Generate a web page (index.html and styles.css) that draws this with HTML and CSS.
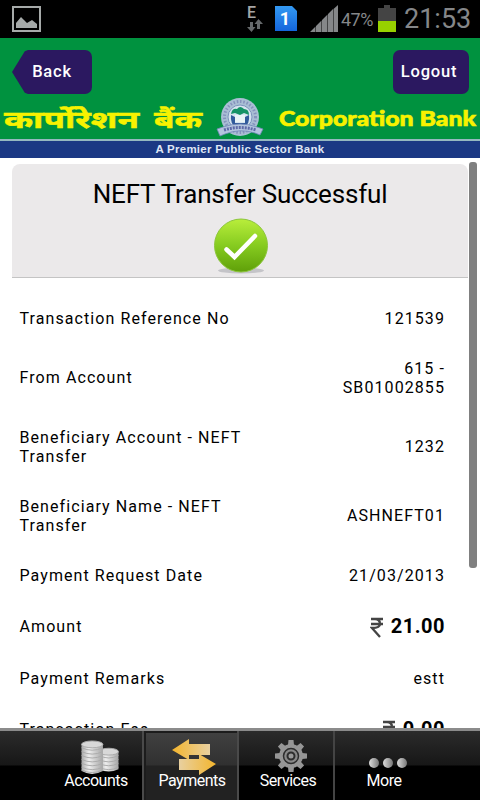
FILE: index.html
```html
<!DOCTYPE html>
<html lang="en">
<head>
    <meta charset="UTF-8">
    <meta name="viewport" content="width=device-width, initial-scale=1.0">
    <title>Corporation Bank - NEFT Transfer</title>
    <link rel="stylesheet" href="styles.css">
</head>
<body>
    <div class="status-bar">
        <svg class="picture-icon" width="29" height="26" viewBox="0 0 29 26">
            <rect x="1" y="1" width="27" height="24" fill="none" stroke="#a6aaa9" stroke-width="2"/>
            <path d="M4 22V17L9 11L12 14L15 17L20 14L25 18V22Z" fill="#a6aaa9"/>
        </svg>
        <div class="edge">
            <span>E</span>
            <svg width="16" height="13" viewBox="0 0 16 13" fill="#66696b">
                <path d="M3 3h3v5h2.500L4.500 13L0 8h3z"/>
                <path d="M10 10h3V5h3L11.500 0L7.500 5H10z"/>
            </svg>
        </div>
        <svg class="sim-icon" width="22" height="25" viewBox="0 0 22 25">
            <defs>
                <linearGradient id="sim" x1="0" y1="0" x2="0" y2="1">
                    <stop offset="0" stop-color="#3399f2"/>
                    <stop offset="1" stop-color="#1465dc"/>
                </linearGradient>
            </defs>
            <path d="M0 0H17L22 5V25H0Z" fill="url(#sim)"/>
            <text x="10" y="18.500" class="sim-number">1</text>
        </svg>
        <svg class="signal-icon" width="29" height="28" viewBox="0 0 29 28" fill="#858789">
            <path d="M0 27L5.500 21.500V27ZM6 21L11.500 15.500V27H6ZM12 15L17.500 9.500V27H12ZM18 9L23 4V27H18ZM23.500 4L28 0V27H23.500Z"/>
        </svg>
        <span class="percent">47%</span>
        <svg class="battery-icon" width="18" height="27" viewBox="0 0 18 27">
            <path d="M6 0H12V3H18V16H0V3H6Z" fill="#444"/>
            <rect y="16" width="18" height="11" fill="#97d000"/>
        </svg>
        <span class="clock">21:53</span>
    </div>

    <header class="header">
        <div class="header-buttons">
            <button class="back">Back</button>
            <button class="logout">Logout</button>
        </div>
        <div class="brand">
            <svg width="480" height="44" viewBox="0 0 480 44">
                <text class="brand-hindi" x="4" y="33" textLength="135" lengthAdjust="spacingAndGlyphs">कार्पोरेशन</text>
                <text class="brand-hindi" x="154" y="33" textLength="48" lengthAdjust="spacingAndGlyphs">बैंक</text>
                <g transform="translate(240 22)">
                    <circle r="19" fill="#a9bed4"/>
                    <circle r="15.500" fill="none" stroke="#8593bd" stroke-width="3" stroke-dasharray="1.500 1.800"/>
                    <circle r="12" fill="#d6e4ef" stroke="#7c94bd"/>
                    <path d="M-9 -3Q-8 -9 -3 -8Q0 -12 4 -8Q9 -8 9 -2L4 -4L0 -2L-5 -4Z" fill="#159266"/>
                    <path d="M-9 -2L-5 0V6H5V0L9 -2Q10 7 4 10H-4Q-10 7 -9 -2Z" fill="#315a9b"/>
                    <path d="M-5 -2H5V5H-5Z" fill="#e9f3f6"/>
                    <path d="M-23 12L-17 10Q0 4 17 10L23 12L20 18L15 16Q0 11 -15 17L-20 19Z" fill="#b4c5de" stroke="#7187b9" stroke-width=".8"/>
                    <path d="M-16 13Q0 8 16 13" fill="none" stroke="#5f6aa8" stroke-width="3" stroke-dasharray="2 1"/>
                </g>
                <text class="brand-english" x="279" y="31" textLength="197" lengthAdjust="spacingAndGlyphs">Corporation Bank</text>
            </svg>
        </div>
        <div class="tagline">A Premier Public Sector Bank</div>
    </header>

    <main class="content">
        <section class="result">
            <h1>NEFT Transfer Successful</h1>
            <svg width="58" height="58" viewBox="0 0 56 56">
                <defs>
                    <linearGradient id="ok" x1="0" y1="0" x2="0" y2="1">
                        <stop offset="0" stop-color="#b9ee3b"/>
                        <stop offset=".5" stop-color="#86cb20"/>
                        <stop offset="1" stop-color="#5fa009"/>
                    </linearGradient>
                </defs>
                <ellipse cx="28" cy="52.500" rx="23" ry="3" fill="#c4c4c8"/>
                <circle cx="28" cy="27.500" r="26.500" fill="url(#ok)" stroke="#8cc63c"/>
                <path d="M13.500 31.500L21.500 39L42 18" fill="none" stroke="#fff" stroke-width="4.500" stroke-linecap="round"/>
            </svg>
        </section>

        <div class="details">
            <div class="row"><span class="label">Transaction Reference No</span><span class="value">121539</span></div>
            <div class="row"><span class="label">From Account</span><span class="value">615 - SB01002855</span></div>
            <div class="row"><span class="label">Beneficiary Account - NEFT Transfer</span><span class="value">1232</span></div>
            <div class="row"><span class="label">Beneficiary Name - NEFT Transfer</span><span class="value">ASHNEFT01</span></div>
            <div class="row"><span class="label">Payment Request Date</span><span class="value">21/03/2013</span></div>
            <div class="row money">
                <span class="label">Amount</span>
                <span class="value amount">
                    <svg class="rupee" width="14" height="21" viewBox="0 0 14 21"><path d="M1 2H13M1 7H13M1 2H5Q10 2 10 7Q10 11 2 11L10 20" /></svg>21.00
                </span>
            </div>
            <div class="row money"><span class="label">Payment Remarks</span><span class="value">estt</span></div>
            <div class="row">
                <span class="label">Transaction Fee</span>
                <span class="value amount">
                    <svg class="rupee" width="14" height="21" viewBox="0 0 14 21"><path d="M1 2H13M1 7H13M1 2H5Q10 2 10 7Q10 11 2 11L10 20" /></svg>0.00
                </span>
            </div>
        </div>
        <div class="scrollbar"></div>
    </main>

    <nav class="tabs">
        <a class="tab">
            <svg class="coins" width="40" height="36" viewBox="0 0 40 36">
                <defs>
                    <linearGradient id="coin">
                        <stop offset="0" stop-color="#aaa"/>
                        <stop offset=".35" stop-color="#eee"/>
                        <stop offset="1" stop-color="#a5a5a5"/>
                    </linearGradient>
                </defs>
                <path d="M19 12H39V30Q29 35 19 30Z" fill="url(#coin)"/>
                <path d="M19 16Q29 21 39 16M19 20Q29 25 39 20M19 24Q29 29 39 24M19 28Q29 33 39 28" fill="none" stroke="#aaa"/>
                <ellipse cx="29" cy="12" rx="10" ry="3.500" fill="#d8d8d8" stroke="#aaa"/>
                <path d="M1 4H23V32Q12 38 1 32Z" fill="url(#coin)"/>
                <path d="M1 8Q12 13 23 8M1 12Q12 17 23 12M1 16Q12 21 23 16M1 20Q12 25 23 20M1 24Q12 29 23 24M1 28Q12 33 23 28M1 31Q12 36 23 31" fill="none" stroke="#aaa"/>
                <ellipse cx="12" cy="4.500" rx="11" ry="3.500" fill="#d8d8d8" stroke="#aaa"/>
            </svg>
            <span>Accounts</span>
        </a>
        <a class="tab active">
            <svg class="arrows" width="44" height="36" viewBox="0 0 44 36">
                <defs>
                    <linearGradient id="left">
                        <stop offset="0" stop-color="#f3b52d"/>
                        <stop offset="1" stop-color="#e8d0a0"/>
                    </linearGradient>
                    <linearGradient id="right">
                        <stop offset="0" stop-color="#e8d0a0"/>
                        <stop offset="1" stop-color="#f3b52d"/>
                    </linearGradient>
                </defs>
                <path d="M0 11L17 0V5H38V16H17V21Z" fill="url(#left)"/>
                <path d="M44 25L27 15V20H7V31H27V36Z" fill="url(#right)"/>
            </svg>
            <span>Payments</span>
        </a>
        <a class="tab services">
            <svg class="gear" width="32" height="32" viewBox="-16 -16 32 32">
                <g fill="#969696">
                    <circle r="12"/>
                    <path id="teeth" d="M-3 -11L-2.500 -16H2.500L3 -11V11L2.500 16H-2.500L-3 11Z"/>
                    <use href="#teeth" transform="rotate(45)"/>
                    <use href="#teeth" transform="rotate(90)"/>
                    <use href="#teeth" transform="rotate(135)"/>
                </g>
                <circle r="7.500" fill="#888" stroke="#2d2d2d" stroke-width="1.500"/>
                <circle r="3.500" fill="#999" stroke="#2d2d2d" stroke-width="2"/>
            </svg>
            <span>Services</span>
        </a>
        <a class="tab">
            <svg class="dots" width="38" height="10" viewBox="0 0 38 10">
                <defs>
                    <linearGradient id="dot">
                        <stop offset="0" stop-color="#ddd"/>
                        <stop offset="1" stop-color="#777"/>
                    </linearGradient>
                </defs>
                <circle cx="5" cy="5" r="5" fill="url(#dot)"/>
                <circle cx="19" cy="5" r="5" fill="url(#dot)"/>
                <circle cx="33" cy="5" r="5" fill="url(#dot)"/>
            </svg>
            <span>More</span>
        </a>
    </nav>
</body>
</html>
```
FILE: styles.css
```css
* {
    box-sizing: border-box;
}
body {
    font-family: Roboto, "Liberation Sans", sans-serif;
    margin: 0;
    width: 480px;
    height: 800px;
    display: flex;
    flex-direction: column;
    overflow: hidden;
    background: #fff;
    color: #000;
}
.status-bar {
    height: 38px;
    flex: none;
    display: flex;
    align-items: flex-start;
    padding-left: 12px;
    background: #000;
    color: #858789;
}
.picture-icon {
    margin-top: 6px;
}
.edge {
    width: 17px;
    margin: 7px 11px 0 206px;
    font-size: 16px;
    line-height: 12px;
    font-weight: 500;
    color: #a5a5a5;
}
.edge span,
.edge svg {
    display: block;
}
.sim-icon {
    margin-top: 6px;
}
.sim-number {
    font-size: 18px;
    font-weight: 700;
    fill: #fff;
    text-anchor: middle;
}
.signal-icon {
    margin: 5px 2px 0 13px;
}
.percent {
    width: 34px;
    margin: 9px 3px 0 0;
    font-size: 18px;
    line-height: 22px;
    letter-spacing: -0.5px;
}
.battery-icon {
    margin-top: 5px;
}
.clock {
    margin: 3px 0 0 8px;
    font-size: 27px;
    line-height: 32px;
}
.header {
    height: 120px;
    flex: none;
    background: #00923f;
}
.header-buttons {
    display: flex;
    justify-content: space-between;
    padding: 12px 11px 0 12px;
    height: 57px;
}
.header-buttons button {
    height: 44px;
    padding: 0 0 2px;
    border: none;
    border-radius: 7px;
    background: #2b1860;
    color: #fff;
    font-family: inherit;
    font-size: 16.5px;
    font-weight: 500;
    letter-spacing: 0.8px;
}
.header-buttons .back {
    width: 80px;
    clip-path: polygon(0 50%, 16% 3%, 20% 0, 100% 0, 100% 100%, 20% 100%, 16% 97%);
}
.header-buttons .logout {
    width: 76px;
    text-indent: -4px;
}
.brand {
    height: 44px;
}
.brand svg {
    display: block;
}
.brand-hindi {
    font-family: "Noto Sans Devanagari", "Noto Sans", sans-serif;
    font-size: 24px;
    font-weight: 700;
    fill: #f8f200;
    stroke: #f8f200;
    stroke-width: 0.5px;
}
.brand-english {
    font-family: Lato, sans-serif;
    font-size: 20px;
    font-weight: 900;
    fill: #f8f200;
    stroke: #f8f200;
    stroke-width: 0.6px;
}
.tagline {
    height: 19px;
    border-top: 2px solid #95b8c0;
    background: #1b3884;
    color: #dfe6f5;
    font-family: "Liberation Sans", Arial, sans-serif;
    font-size: 11.5px;
    font-weight: 700;
    letter-spacing: 0.25px;
    line-height: 17px;
    text-align: center;
}
.content {
    position: relative;
    flex: 1;
    min-height: 0;
    padding: 6px 12px 0;
    overflow: hidden;
}
.result {
    height: 114px;
    padding-top: 14px;
    border-bottom: 1px solid #c4c4c4;
    border-radius: 8px 8px 0 0;
    background: #ebe9ea;
    text-align: center;
}
.result h1 {
    margin: 0 0 7px;
    font-size: 26px;
    font-weight: 400;
    line-height: 32px;
    letter-spacing: -0.17px;
}
.result svg {
    display: block;
    margin: 0 auto;
    padding-left: 2px;
}
.details {
    padding: 15px 23px 0 7.5px;
}
.row {
    display: flex;
    align-items: center;
    justify-content: space-between;
    min-height: 50px;
    padding: 15.5px 0;
    font-size: 16px;
    line-height: 19px;
    letter-spacing: 1.08px;
}
.money {
    min-height: 52px;
}
.label {
    width: 236px;
}
.value {
    width: 120px;
    text-align: right;
}
.amount {
    display: flex;
    justify-content: flex-end;
    font-size: 20px;
    font-weight: 700;
    letter-spacing: 0.5px;
}
.rupee {
    margin: 0 7px -2px 0;
    fill: none;
    stroke: #444;
    stroke-width: 2.3px;
}
.scrollbar {
    position: absolute;
    top: 4px;
    right: 3px;
    width: 8px;
    height: 406px;
    border-radius: 3px;
    background: #808080;
}
.tabs {
    height: 72px;
    flex: none;
    display: flex;
    padding: 0 48px;
    border-top: 3px solid #8b8b8b;
    background: linear-gradient(#2b2b2b, #171717 34px, #000 35px);
}
.tab {
    width: 96px;
    display: flex;
    flex-direction: column;
    align-items: center;
    padding-top: 9px;
    color: #fff;
    font-size: 16px;
    line-height: 19px;
    letter-spacing: -0.5px;
}
.tab svg {
    display: block;
    margin-bottom: -4px;
}
.tab span {
    margin-top: auto;
    margin-bottom: 10px;
    position: relative;
}
.tab .coins {
    margin-left: 7px;
}
.tab.active {
    width: 97px;
    border-right: 2px solid #4a4a4a;
    border-left: 2px solid #4a4a4a;
    margin: 0 1px 0 -2px;
    padding: 8px 0 0 3px;
    background: linear-gradient(#414141, #303030 34px, #222 35px);
    box-shadow: inset 2px 2px #1c1c1c;
}
.tab .arrows {
    margin-left: 4px;
}
.tab.services {
    width: 95px;
    margin-right: 1px;
    padding-left: 3px;
    border-right: 2px solid #444;
}
.tab .gear {
    margin-left: 6px;
}
.tab .dots {
    margin: 18px 0 0 7px;
}
```
